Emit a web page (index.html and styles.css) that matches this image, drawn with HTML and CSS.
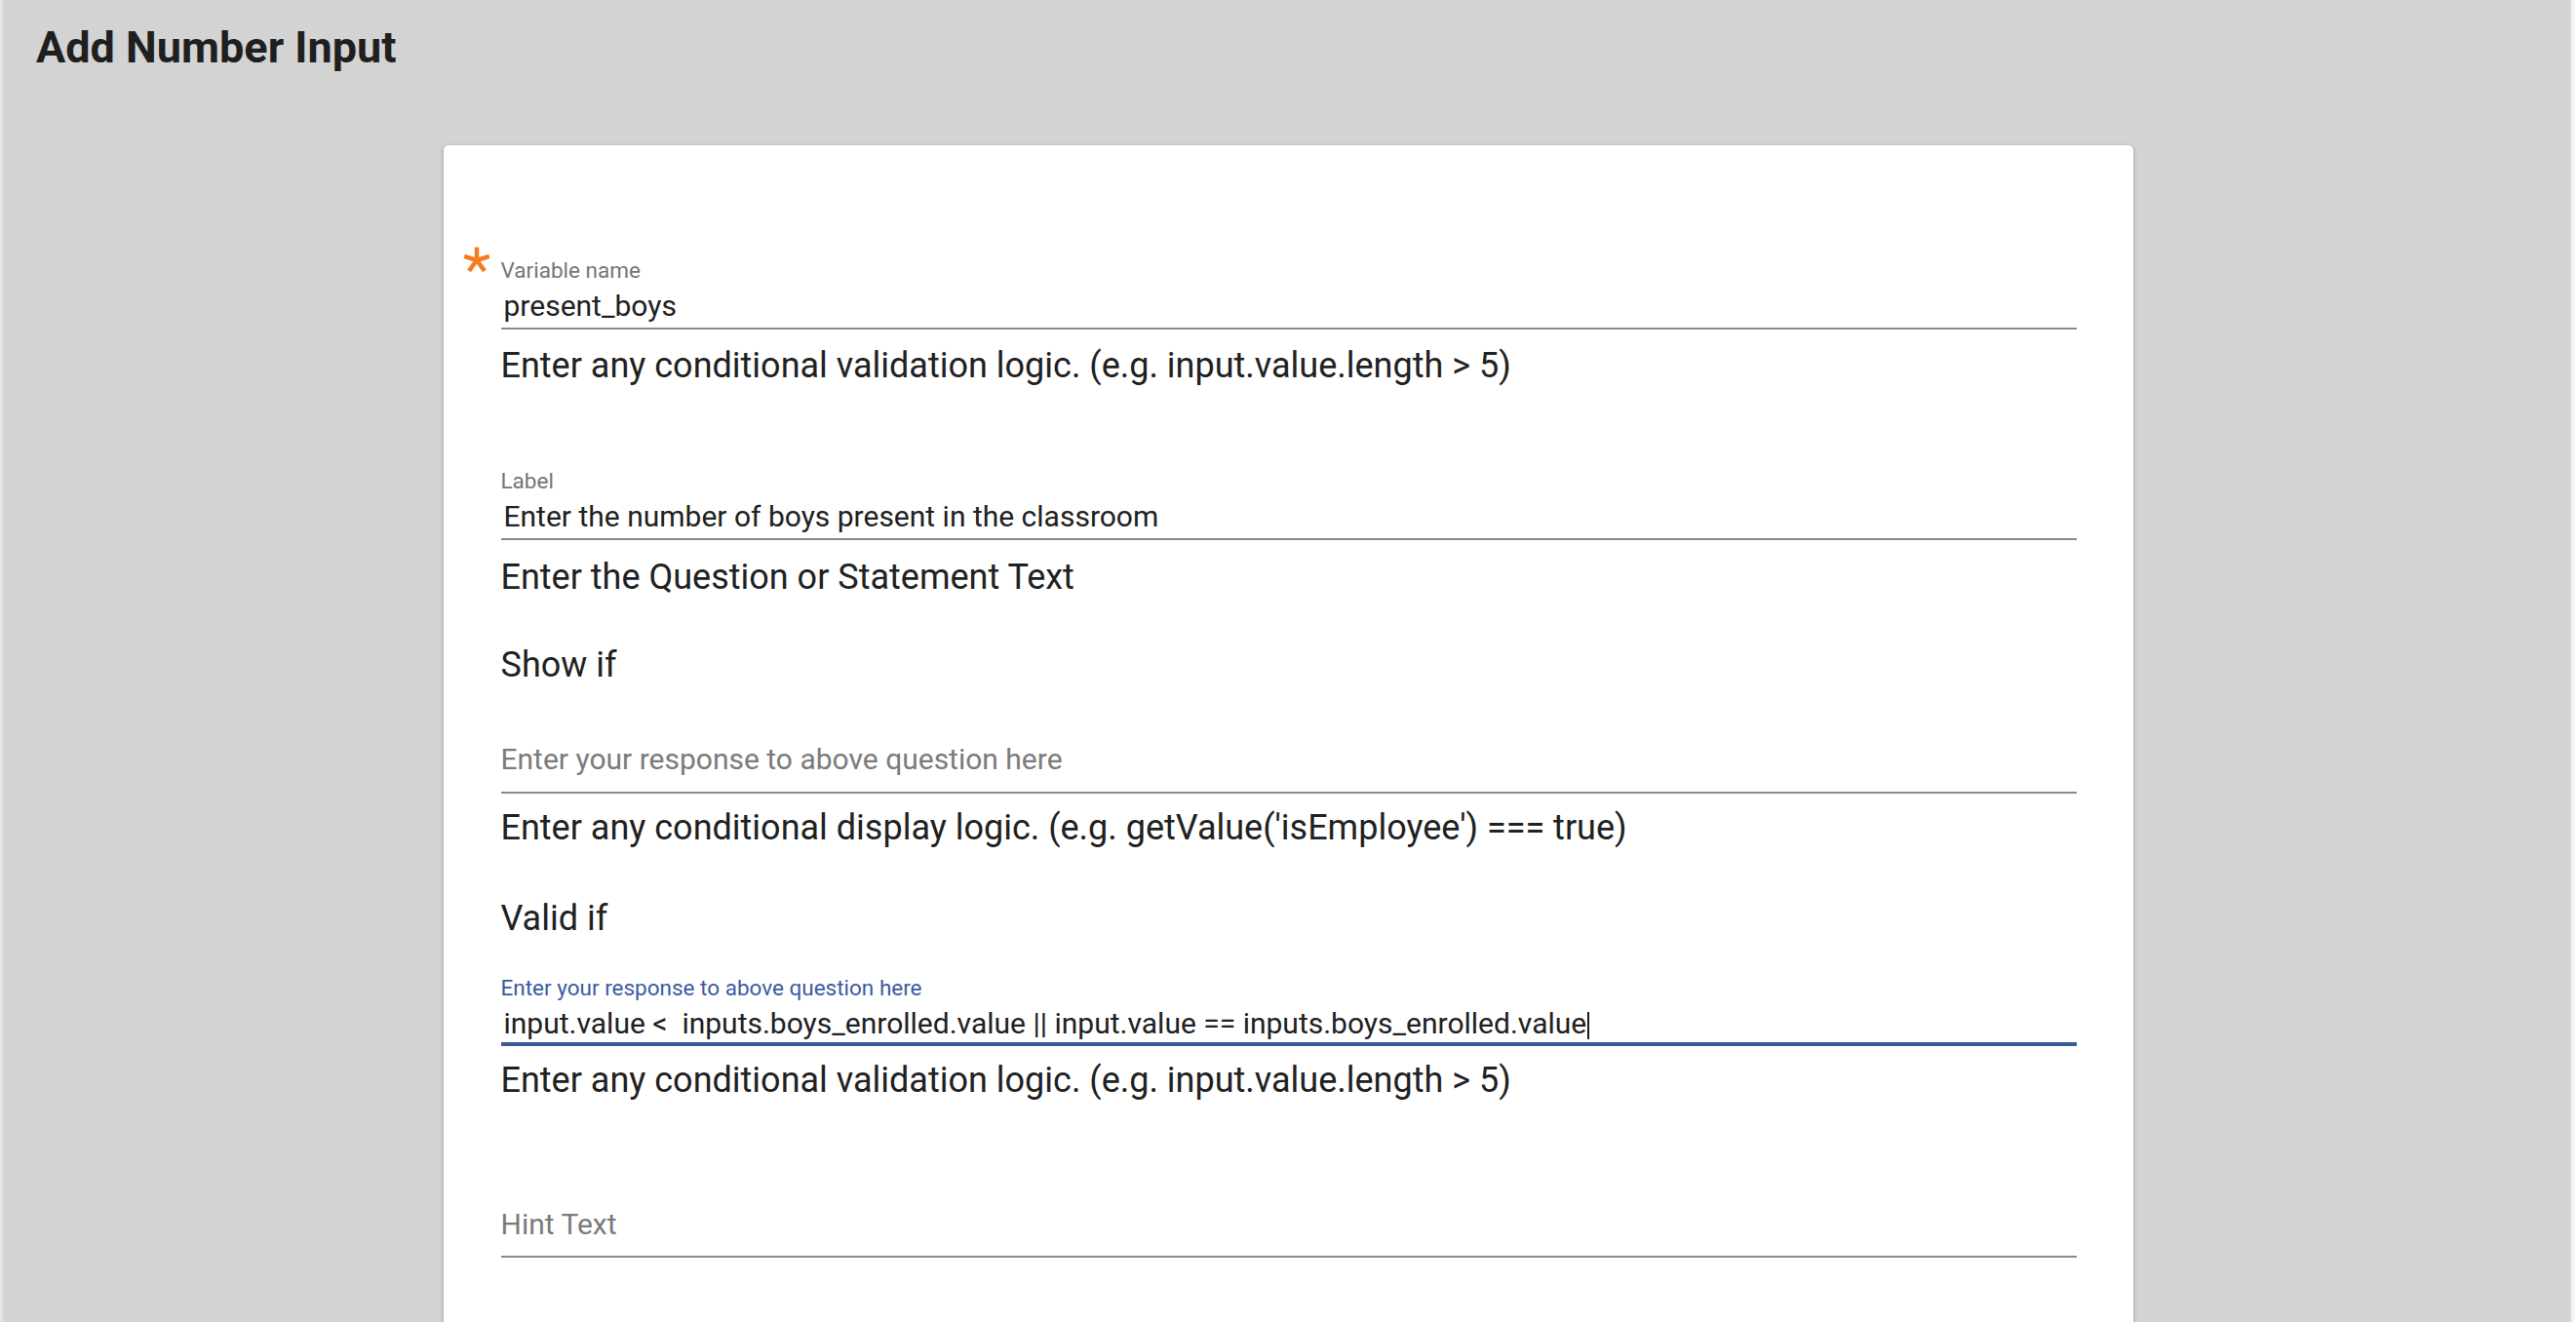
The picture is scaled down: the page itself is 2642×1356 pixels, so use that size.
FILE: index.html
```html
<!DOCTYPE html>
<html lang="en">
<head>
<meta charset="utf-8">
<title>Add Number Input</title>
<link rel="stylesheet" href="styles.css">
</head>
<body>
<h1 class="page-title">Add Number Input</h1>
<main class="card">
  <div class="field field-required">
    <svg class="required-mark" viewBox="0 0 26 26" width="28" height="28" aria-hidden="true">
      <g stroke="#f47b20" stroke-width="4.2" stroke-linecap="butt">
        <line x1="13" y1="13" x2="13" y2="0.5"/>
        <line x1="13" y1="13" x2="1.1" y2="9.1"/>
        <line x1="13" y1="13" x2="24.9" y2="9.1"/>
        <line x1="13" y1="13" x2="5.6" y2="23.1"/>
        <line x1="13" y1="13" x2="20.4" y2="23.1"/>
      </g>
    </svg>
    <div class="field-label">Variable name</div>
    <div class="field-input has-value">present_boys</div>
  </div>
  <p class="text helper-1">Enter any conditional validation logic. (e.g. input.value.length &gt; 5)</p>

  <div class="field field-2">
    <div class="field-label">Label</div>
    <div class="field-input has-value">Enter the number of boys present in the classroom</div>
  </div>
  <p class="text question">Enter the Question or Statement Text</p>

  <p class="text section show-if">Show if</p>
  <div class="field field-plain field-show">
    <div class="field-input placeholder">Enter your response to above question here</div>
  </div>
  <p class="text helper-2">Enter any conditional display logic. (e.g. getValue('isEmployee') === true)</p>

  <p class="text section valid-if">Valid if</p>
  <div class="field field-focused">
    <div class="field-label">Enter your response to above question here</div>
    <div class="field-input has-value">input.value &lt;  inputs.boys_enrolled.value || input.value == inputs.boys_enrolled.value<span class="caret"></span></div>
  </div>
  <p class="text helper-3">Enter any conditional validation logic. (e.g. input.value.length &gt; 5)</p>

  <div class="field field-plain field-hint">
    <div class="field-input placeholder">Hint Text</div>
  </div>
</main>
</body>
</html>
```

FILE: styles.css
```css
html, body {
  margin: 0;
  padding: 0;
  height: 100%;
  overflow: hidden;
}

body {
  font-family: Roboto, "Liberation Sans", Arial, sans-serif;
  color: #212121;
  background: linear-gradient(to right, #ebebeb 0px, #d3d3d3 5px, #d3d3d3 2636px, #ececec 2637px, #ffffff 2642px);
}

.page-title {
  margin: 0;
  padding: 22px 0 0 37px;
  font-size: 45px;
  line-height: 54px;
  font-weight: 700;
  color: #1f1f1f;
}

.card {
  box-sizing: border-box;
  width: 1733px;
  margin: 73px auto 0;
  padding: 114.5px 58px 400px 59px;
  background: #ffffff;
  border-radius: 5px;
  box-shadow: 0 1px 4px rgba(0, 0, 0, 0.22), 0 1px 2px rgba(0, 0, 0, 0.14);
}

.field {
  position: relative;
}

.required-mark {
  position: absolute;
  left: -38.5px;
  top: -11px;
}

.field-label {
  font-size: 22.5px;
  line-height: 26px;
  color: #757575;
  white-space: nowrap;
}

.field-input {
  margin-top: 6px;
  font-size: 30px;
  line-height: 36px;
  padding: 0 0 4px 0;
  border-bottom: 2px solid #8a8a8a;
  white-space: pre;
}

.field-input.has-value {
  padding-left: 3px;
  color: #212121;
}

.field-input.placeholder {
  color: #7b7b7b;
  margin-top: 0;
  padding-bottom: 15px;
}

.field-hint .field-input.placeholder {
  padding-bottom: 14px;
}

.field-focused .field-label {
  color: #3b5ba0;
}

.field-focused .field-input {
  margin-top: 5.5px;
  padding-bottom: 1px;
  border-bottom: 4px solid #3b5a98;
}

.caret {
  display: inline-block;
  width: 2px;
  height: 28px;
  margin-left: 1px;
  vertical-align: -6px;
  background: #1a1a1a;
}

.text {
  margin: 0;
  font-size: 36px;
  line-height: 42px;
  color: #212121;
  white-space: nowrap;
}

.helper-1 { margin-top: 16.1px; }
.field-2 { margin-top: 84.9px; }
.question { margin-top: 16.1px; }
.show-if { margin-top: 48.5px; }
.field-show { margin-top: 57.9px; }
.helper-2 { margin-top: 14.1px; }
.valid-if { margin-top: 51px; }
.field-focused { margin-top: 37.4px; }
.helper-3 { margin-top: 14.1px; }
.field-hint { margin-top: 108.6px; }
```
